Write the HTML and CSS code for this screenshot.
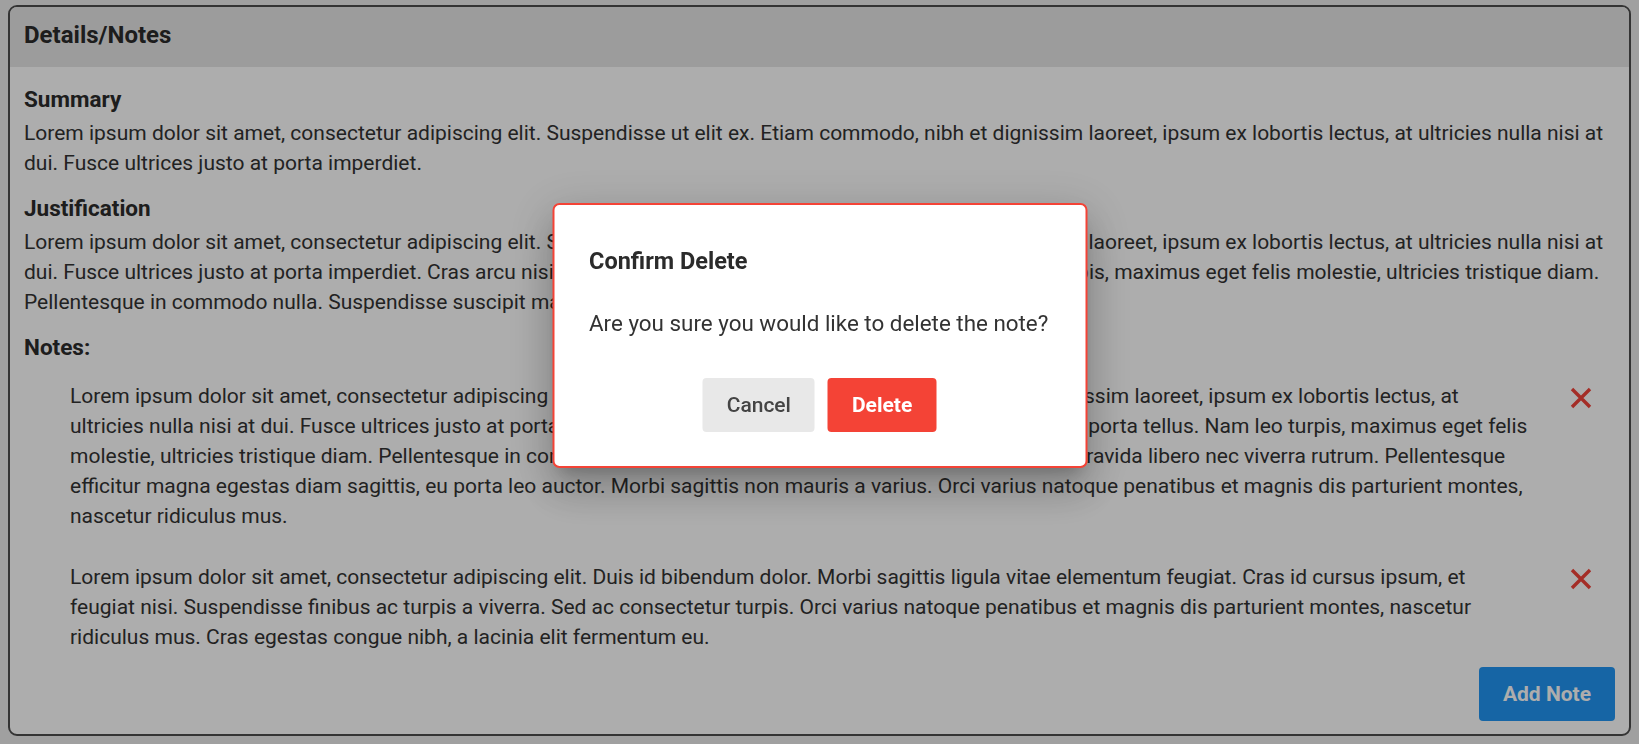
FILE: index.html
```html
<!DOCTYPE html>
<html lang="en">
<head>
<meta charset="utf-8">
<title>Details/Notes</title>
<link rel="stylesheet" href="styles.css">
</head>
<body>
<div class="card">
  <div class="card-header">
    <h2 class="card-title">Details/Notes</h2>
  </div>
  <div class="card-body">
    <section class="section">
      <h3 class="section-title">Summary</h3>
      <p class="section-text">Lorem ipsum dolor sit amet, consectetur adipiscing elit. Suspendisse ut elit ex. Etiam commodo, nibh et dignissim laoreet, ipsum ex lobortis lectus, at ultricies nulla nisi at dui. Fusce ultrices justo at porta imperdiet.</p>
    </section>
    <section class="section">
      <h3 class="section-title">Justification</h3>
      <p class="section-text">Lorem ipsum dolor sit amet, consectetur adipiscing elit. Suspendisse ut elit ex. Etiam commodo, nibh et dignissim laoreet, ipsum ex lobortis lectus, at ultricies nulla nisi at dui. Fusce ultrices justo at porta imperdiet. Cras arcu nisi, vulputate vitae sapien, tempus porta tellus. Nam leo turpis, maximus eget felis molestie, ultricies tristique diam. Pellentesque in commodo nulla. Suspendisse suscipit massa vel nisl.</p>
    </section>
    <section class="section section-notes">
      <h3 class="section-title">Notes:</h3>
      <ul class="notes">
        <li class="note">
          <p class="note-text">Lorem ipsum dolor sit amet, consectetur adipiscing elit. Suspendisse ut elit ex. Etiam commodo, nibh et dignissim laoreet, ipsum ex lobortis lectus, at ultricies nulla nisi at dui. Fusce ultrices justo at porta imperdiet. Cras arcu nisi, vulputate vitae sapien, tempus porta tellus. Nam leo turpis, maximus eget felis molestie, ultricies tristique diam. Pellentesque in commodo nulla. Suspendisse suscipit massa, ullamcorper gravida libero nec viverra rutrum. Pellentesque efficitur magna egestas diam sagittis, eu porta leo auctor. Morbi sagittis non mauris a varius. Orci varius natoque penatibus et magnis dis parturient montes, nascetur ridiculus mus.</p>
          <button class="note-del" type="button" aria-label="Delete note">
            <svg viewBox="0 0 22 22" width="22" height="22"><path d="M2 2 L20 20 M20 2 L2 20" stroke="currentColor" stroke-width="3.4" fill="none"/></svg>
          </button>
        </li>
        <li class="note">
          <p class="note-text">Lorem ipsum dolor sit amet, consectetur adipiscing elit. Duis id bibendum dolor. Morbi sagittis ligula vitae elementum feugiat. Cras id cursus ipsum, et feugiat nisi. Suspendisse finibus ac turpis a viverra. Sed ac consectetur turpis. Orci varius natoque penatibus et magnis dis parturient montes, nascetur ridiculus mus. Cras egestas congue nibh, a lacinia elit fermentum eu.</p>
          <button class="note-del" type="button" aria-label="Delete note">
            <svg viewBox="0 0 22 22" width="22" height="22"><path d="M2 2 L20 20 M20 2 L2 20" stroke="currentColor" stroke-width="3.4" fill="none"/></svg>
          </button>
        </li>
      </ul>
    </section>
    <div class="card-footer">
      <button class="btn btn-primary" type="button">Add Note</button>
    </div>
  </div>
</div>

<div class="backdrop"></div>
<div class="dialog" role="dialog">
  <h2 class="dialog-title">Confirm Delete</h2>
  <p class="dialog-text">Are you sure you would like to delete the note?</p>
  <div class="dialog-actions">
    <button class="btn btn-cancel" type="button">Cancel</button>
    <button class="btn btn-danger" type="button">Delete</button>
  </div>
</div>
</body>
</html>
```

FILE: styles.css
```css
* { box-sizing: border-box; }

html, body { height: 100%; }

body {
  margin: 0;
  padding: 5px 8px 10px;
  background: #ececec;
  font-family: Roboto, "Liberation Sans", Arial, sans-serif;
  color: #333;
  overflow: hidden;
}

.card {
  border: 2px solid #4d4d4d;
  border-radius: 9px;
  background: #fff;
  overflow: hidden;
}

.card-header {
  background: #e6e6e6;
  padding: 13px 14px 17px;
}

.card-title {
  margin: 0;
  font-size: 24px;
  line-height: 30px;
  font-weight: 700;
  color: #2b2b2b;
}

.card-body {
  padding: 17px 14px 13px;
}

.section + .section { margin-top: 15px; }
.section-notes.section { margin-top: 15px; }

.section-title {
  margin: 0 0 4px;
  font-size: 22.5px;
  line-height: 30px;
  font-weight: 700;
  color: #2b2b2b;
}

.section-text {
  margin: 0;
  font-size: 21px;
  line-height: 30px;
}

.notes {
  list-style: none;
  margin: 0;
  padding: 0 0 0 46px;
}

.note {
  display: flex;
  align-items: flex-start;
  padding: 15px 0;
}

.note + .note { margin-top: 1px; }

.note-text {
  margin: 0;
  width: 1463px;
  font-size: 21px;
  line-height: 30px;
}

.note-del {
  margin: 6px 0 0 37px;
  padding: 0;
  width: 22px;
  height: 22px;
  border: 0;
  background: none;
  color: #f2433a;
  display: flex;
}

.card-footer {
  display: flex;
  justify-content: flex-end;
}

.btn {
  height: 54px;
  border: 0;
  border-radius: 4px;
  font-family: Roboto, "Liberation Sans", Arial, sans-serif;
  font-size: 21px;
  cursor: pointer;
}

.btn-primary {
  padding: 0 24px;
  background: #2196f3;
  color: #fff;
  font-weight: 700;
}

.backdrop {
  position: fixed;
  inset: 0;
  background: rgba(0, 0, 0, 0.32);
}

.dialog {
  position: fixed;
  top: 203px;
  left: 50%;
  transform: translateX(-50%);
  width: 535px;
  height: 265px;
  padding: 41px 35px 0;
  background: #fff;
  border: 2px solid #f44336;
  border-radius: 7px;
  box-shadow: 0 11px 15px -7px rgba(0,0,0,.2), 0 24px 38px 3px rgba(0,0,0,.14), 0 9px 46px 8px rgba(0,0,0,.12);
}

.dialog-title {
  margin: 0;
  font-size: 23.5px;
  line-height: 30px;
  font-weight: 700;
  color: #2b2b2b;
}

.dialog-text {
  margin: 32px 0 0;
  font-size: 22.4px;
  line-height: 30px;
  color: #333;
  white-space: nowrap;
}

.dialog-actions {
  margin-top: 40px;
  display: flex;
  justify-content: center;
  gap: 13px;
}

.btn-cancel {
  padding: 0 24px;
  background: #e8e8e8;
  color: #444;
  font-weight: 500;
}

.btn-danger {
  padding: 0 24px;
  background: #f44336;
  color: #fff;
  font-weight: 700;
}
```
